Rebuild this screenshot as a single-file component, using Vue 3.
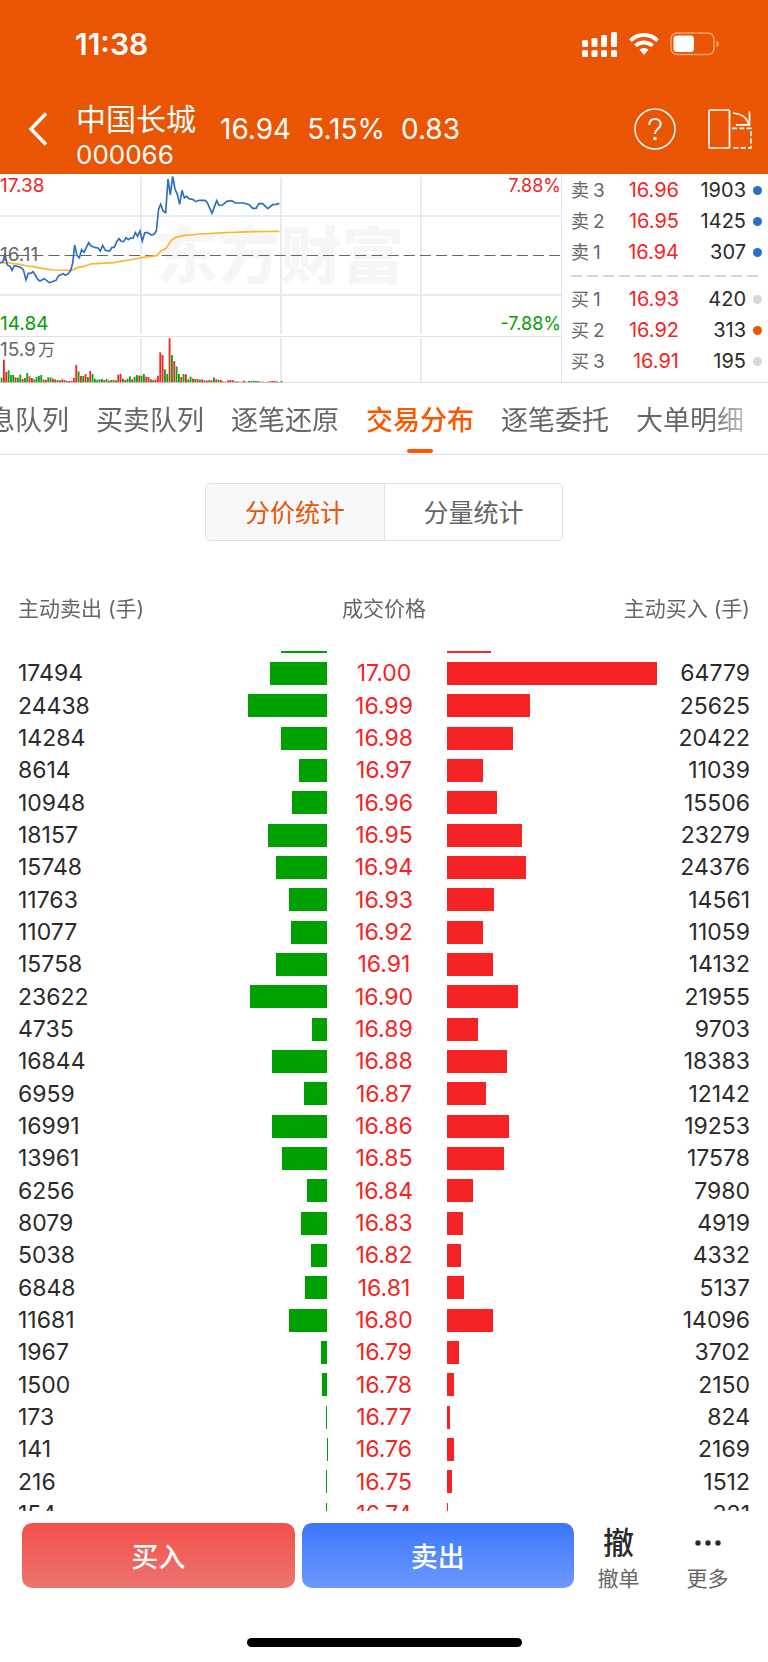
<script setup>
import { onMounted, ref } from 'vue'

const tabs = ['消息队列', '买卖队列', '逐笔还原', '交易分布', '逐笔委托', '大单明细']
const activeTab = ref('交易分布')
const modes = ['分价统计', '分量统计']
const activeMode = ref('分价统计')

const asks = [
  { name: '卖3', price: '16.96', volume: 1903, dot: 'blue' },
  { name: '卖2', price: '16.95', volume: 1425, dot: 'blue' },
  { name: '卖1', price: '16.94', volume: 307, dot: 'blue' },
]
const bids = [
  { name: '买1', price: '16.93', volume: 420, dot: 'gray' },
  { name: '买2', price: '16.92', volume: 313, dot: 'orange' },
  { name: '买3', price: '16.91', volume: 195, dot: 'gray' },
]

// [sell, price, buy]
const rows = [
  [14290, '17.01', 13580],
  [17494, '17.00', 64779],
  [24438, '16.99', 25625],
  [14284, '16.98', 20422],
  [8614, '16.97', 11039],
  [10948, '16.96', 15506],
  [18157, '16.95', 23279],
  [15748, '16.94', 24376],
  [11763, '16.93', 14561],
  [11077, '16.92', 11059],
  [15758, '16.91', 14132],
  [23622, '16.90', 21955],
  [4735, '16.89', 9703],
  [16844, '16.88', 18383],
  [6959, '16.87', 12142],
  [16991, '16.86', 19253],
  [13961, '16.85', 17578],
  [6256, '16.84', 7980],
  [8079, '16.83', 4919],
  [5038, '16.82', 4332],
  [6848, '16.81', 5137],
  [11681, '16.80', 14096],
  [1967, '16.79', 3702],
  [1500, '16.78', 2150],
  [173, '16.77', 824],
  [141, '16.76', 2169],
  [216, '16.75', 1512],
  [154, '16.74', 321],
]
const max = Math.max(...rows.flatMap(r => [r[0], r[2]]))
const barWidth = (n) => `${(n / max * 100).toFixed(2)}%`

// volume per tick, r = up, g = down
const volumes = ('g14 r68 r31 g36 g22 g22 r15 g14 g23 r10 g13 g28 r18 r13 g9 g16 g19 g22 r8 r8 g15 g15 r11 r9 g7 r6 r9 r7 g4 r4 ' +
  'r4 r13 r52 g33 r19 g19 r25 g16 r34 g25 g11 g8 g9 g10 r7 g10 r5 g7 r7 g6 r23 r25 g11 r7 g11 g18 r9 g17 g22 r20 ' +
  'g20 g25 r17 r16 g9 r7 r8 r20 r90 r82 g39 g25 r132 g82 r64 g48 g25 r16 g25 r24 g9 g17 r11 g10 r10 g8 r9 r6 r5 g7 ' +
  'r6 g15 r9 g8 r7 r3 r2 r6 r7 r7 g3 g3 r2 r2 r5 r2 g4 g4 g5 g4 g4 r2 r2 r1 g2 r3 r4 r4 r3 g1 g4')
  .split(' ')
  .map((v, i) => ({ x: 2 + i * 7, h: Number(v.slice(1)), up: v[0] === 'r' }))

const priceLine = '0,293 8,292 15,268 22,300 30,304 36,316 43,302 60,306 70,314 78,345 85,325 92,325 99,320 106,330 113,343 120,348 133,341 148,353 168,346 176,332 190,326 196,331 205,326 212,316 218,295 224,240 231,272 238,278 245,254 252,262 266,233 273,243 287,248 294,249 301,258 308,241 316,256 329,258 336,247 343,247 350,230 357,221 364,229 371,230 378,218 385,224 392,219 399,220 406,203 413,214 420,198 427,228 434,204 441,202 455,210 462,208 469,198 476,132 482,118 489,137 497,143 504,42 511,90 518,34 525,72 532,88 539,118 546,76 553,99 560,94 567,101 578,103 588,110 597,106 615,106 622,113 636,145 650,107 657,121 668,120 680,109 695,107 706,114 730,114 748,119 758,130 768,130 777,116 788,116 803,131 818,119 828,118 838,115'
const avgLine = '0,293 30,294 60,298 80,303 100,305 130,311 160,315 215,316 232,308 250,305 272,297 300,295 342,293 360,289 390,285 430,277 470,272 484,257 498,250 512,228 526,217 550,212 600,207 680,203 760,200 838,199'

const tabBar = ref(null)
const list = ref(null)
onMounted(() => {
  tabBar.value.scrollLeft = 39
  list.value.scrollTop = 26
})
</script>

<template>
  <div class="page">
    <header class="header">
      <div class="status">
        <span class="time">11:38</span>
        <div class="status-icons">
          <svg width="36" height="26" viewBox="0 0 36 26" fill="#fff">
            <rect x="0" y="9" width="6" height="7" rx="1.5" />
            <rect x="9.5" y="7" width="6" height="9" rx="1.5" />
            <rect x="19" y="4" width="6" height="12" rx="1.5" />
            <rect x="29" y="1" width="6" height="15" rx="1.5" />
            <rect x="0" y="19" width="6" height="7" rx="1.5" />
            <rect x="9.5" y="19" width="6" height="7" rx="1.5" />
            <rect x="19" y="19" width="6" height="7" rx="1.5" />
            <rect x="29" y="19" width="6" height="7" rx="1.5" />
          </svg>
          <svg width="30" height="22" viewBox="0 0 30 22" fill="#fff">
            <path d="M15 0C20.800 0 26 2.200 29.800 6.200L27.200 9C24 5.700 19.700 3.900 15 3.900S6 5.700 2.800 9L.2 6.200C4 2.200 9.200 0 15 0Z" />
            <path d="M15 7.600C18.700 7.600 22.200 9 24.800 11.500L22.100 14.200C20.200 12.400 17.700 11.400 15 11.400S9.800 12.400 7.900 14.200L5.200 11.500C7.800 9 11.300 7.600 15 7.600Z" />
            <path d="M15 15C16.700 15 18.300 15.700 19.500 16.800L15 22L10.500 16.800C11.700 15.700 13.300 15 15 15Z" />
          </svg>
          <svg width="50" height="24" viewBox="0 0 50 24">
            <rect x="1" y="1" width="43" height="21.500" rx="6" fill="none" stroke="#fff" stroke-opacity=".45" stroke-width="1.500" />
            <rect x="3.500" y="3.500" width="20.500" height="16.500" rx="3.500" fill="#fff" />
            <path d="M46.500 8.500C49.500 10 49.500 14 46.500 15.500Z" fill="#fff" fill-opacity=".5" />
          </svg>
        </div>
      </div>
      <div class="title-bar">
        <button class="icon-btn back" aria-label="返回">
          <svg width="20" height="34" viewBox="0 0 20 34" fill="none" stroke="#fff" stroke-width="3.500">
            <path d="M18 1.500L3 17L18 32.500" />
          </svg>
        </button>
        <div class="stock">
          <h1>中国长城</h1>
          <span>000066</span>
        </div>
        <div class="quote">
          <span>16.94</span>
          <span>5.15%</span>
          <span>0.83</span>
        </div>
        <button class="icon-btn" aria-label="帮助">
          <svg width="42" height="42" viewBox="0 0 42 42" fill="none" stroke="#fff" stroke-width="1.500">
            <circle cx="21" cy="21" r="20" />
            <path d="M15.300 17C15.300 13 17.500 11 21 11S26.700 13.200 26.700 16.300C26.700 20.500 21 20.500 21 26" stroke-width="2" />
            <circle cx="21" cy="30.500" r="1.800" fill="#fff" stroke="none" />
          </svg>
        </button>
        <button class="icon-btn rotate" aria-label="横屏">
          <svg width="44" height="40" viewBox="0 0 44 40" fill="none" stroke="#fff" stroke-width="1.700">
            <rect x="1" y="1" width="20.500" height="38" rx="1" />
            <path d="M25 4C33 4.500 39 9 41 15.500M41.500 2.500V15.800H28" />
            <path d="M24 19.300H43V38.800H24" stroke-dasharray="5 2.300" />
          </svg>
        </button>
      </div>
    </header>

    <section class="market">
      <svg class="chart" viewBox="0 0 561 209">
        <text x="156" y="105" class="watermark">东方财富</text>
        <g stroke="#e8eaf1" stroke-width="2" fill="none">
          <path d="M0 42H561M0 121H561M141 3V160M281 3V160M421 3V160M141 164V208M281 164V208M421 164V208" />
          <path d="M0 162.500H561M0 208.500H561" stroke-width="1" stroke="#dfe1e8" />
        </g>
        <path d="M0 81.500H560" stroke="#666" stroke-width="1.200" stroke-dasharray="11 5.150" />
        <svg width="561" height="209" viewBox="0 27 1683 627">
          <rect v-for="v in volumes" :key="v.x" :x="v.x" :y="652 - v.h" width="5.500" :height="v.h" :fill="v.up ? '#f52323' : '#0fa010'" />
          <polyline :points="avgLine" fill="none" stroke="#ffb52e" stroke-width="5" />
          <polyline :points="priceLine" fill="none" stroke="#2b6fc4" stroke-width="5" />
        </svg>
        <g class="axis">
          <text x="0" y="18" fill="#f52323">17.38</text>
          <text x="0" y="87" fill="#666">16.11</text>
          <text x="0" y="156" fill="#00a000">14.84</text>
          <text x="0" y="182" fill="#666">15.9<tspan dx="2" class="unit">万</tspan></text>
        </g>
        <g class="axis percent">
          <text x="561" y="18" fill="#f52323">7.88%</text>
          <text x="561" y="156" fill="#00a000">-7.88%</text>
        </g>
      </svg>
      <div class="book">
        <table>
          <tbody>
            <tr v-for="o in asks" :key="o.name">
              <th scope="row">{{ o.name[0] }}<span>{{ o.name[1] }}</span></th>
              <td class="book-price">{{ o.price }}</td>
              <td class="book-volume">{{ o.volume }}</td>
              <td class="book-dot"><i :class="o.dot"></i></td>
            </tr>
          </tbody>
        </table>
        <div class="divider"></div>
        <table>
          <tbody>
            <tr v-for="o in bids" :key="o.name">
              <th scope="row">{{ o.name[0] }}<span>{{ o.name[1] }}</span></th>
              <td class="book-price">{{ o.price }}</td>
              <td class="book-volume">{{ o.volume }}</td>
              <td class="book-dot"><i :class="o.dot"></i></td>
            </tr>
          </tbody>
        </table>
      </div>
    </section>

    <nav class="tabs">
      <div ref="tabBar" class="tabs-scroll">
        <button v-for="t in tabs" :key="t" :class="{ active: t === activeTab }" @click="activeTab = t">{{ t }}</button>
      </div>
    </nav>

    <div class="modes">
      <button v-for="m in modes" :key="m" :class="{ active: m === activeMode }" @click="activeMode = m">{{ m }}</button>
    </div>

    <div ref="list" class="list">
      <table>
        <colgroup>
          <col class="col-volume">
          <col>
          <col class="col-price">
          <col>
          <col class="col-volume">
        </colgroup>
        <thead>
          <tr>
            <th colspan="2" class="sell-head">主动卖出 (手)</th>
            <th>成交价格</th>
            <th colspan="2" class="buy-head">主动买入 (手)</th>
          </tr>
        </thead>
        <tbody>
          <tr v-for="[sell, price, buy] in rows" :key="price">
            <td class="sell">{{ sell }}</td>
            <td><div class="bar sell-bar" :style="{ width: barWidth(sell) }"></div></td>
            <td class="price">{{ price }}</td>
            <td><div class="bar buy-bar" :style="{ width: barWidth(buy) }"></div></td>
            <td class="buy">{{ buy }}</td>
          </tr>
        </tbody>
      </table>
    </div>

    <footer class="footer">
      <div class="actions">
        <button class="trade buy-btn">买入</button>
        <button class="trade sell-btn">卖出</button>
        <button class="more-btn">
          <b>撤</b>
          <span>撤单</span>
        </button>
        <button class="more-btn">
          <svg width="30" height="40" viewBox="0 0 30 40" fill="#2a2a2a">
            <circle cx="5" cy="20" r="2.700" />
            <circle cx="15" cy="20" r="2.700" />
            <circle cx="25" cy="20" r="2.700" />
          </svg>
          <span>更多</span>
        </button>
      </div>
      <div class="home-bar"></div>
    </footer>
  </div>
</template>

<style>
body {
  margin: 0;
  background: #fff;
}
</style>

<style scoped>
.page {
  display: flex;
  flex-direction: column;
  height: 100vh;
  font-family: Inter, "Noto Sans CJK SC", sans-serif;
  color: #2a2a2a;
}
button {
  padding: 0;
  border: 0;
  background: none;
  font: inherit;
  color: inherit;
  cursor: pointer;
}
svg {
  display: block;
  flex: none;
}
table {
  width: 100%;
  border-collapse: collapse;
}
th,
td {
  padding: 0;
  font-weight: 400;
}

/* header */
.header {
  flex: none;
  background: #ea5504;
  color: #fff;
}
.status {
  display: flex;
  align-items: center;
  justify-content: space-between;
  height: 88px;
  padding: 0 48px 0 75px;
}
.time {
  font-size: 30px;
  font-weight: 600;
}
.status-icons {
  display: flex;
  align-items: center;
  gap: 11px;
}
.title-bar {
  display: flex;
  align-items: center;
  height: 82px;
  padding: 0 16px 4px 28px;
}
.icon-btn {
  flex: none;
}
.back {
  margin-right: 28px;
}
.rotate {
  margin-left: 32px;
}
.stock {
  padding-top: 14px;
  font-size: 26px;
  line-height: 34px;
}
.stock span {
  display: block;
}
h1 {
  margin: 0;
  font-size: 30px;
  font-weight: 400;
  line-height: 38px;
}
.quote {
  display: flex;
  flex: 1;
  gap: 16px;
  margin-left: 24px;
  font-size: 28px;
}

/* chart and order book */
.market {
  display: flex;
  flex: none;
}
.chart {
  flex: 1;
  min-width: 0;
}
.watermark {
  font-size: 62px;
  font-weight: 900;
  fill: #f6f6f6;
}
.axis {
  font-size: 19px;
}
.percent {
  font-size: 18px;
  text-anchor: end;
}
.unit {
  font-size: 17px;
}
.book {
  box-sizing: border-box;
  width: 207px;
  padding: 1px 6px 0 9px;
  border-left: 1px solid #e0e2ea;
  border-bottom: 1px solid #d8dae4;
  font-size: 20px;
  line-height: 31px;
}
.book th,
.book td {
  vertical-align: baseline;
}
.book th {
  width: 36px;
  height: 31px;
  font-size: 18px;
  text-align: left;
  color: #666;
}
.book th span {
  margin-left: 4px;
  font-size: 19px;
}
.book-price {
  width: 72px;
  text-align: right;
  color: #f52323;
}
.book-volume {
  text-align: right;
}
.book td.book-dot {
  width: 16px;
  vertical-align: middle;
}
.book-dot i {
  display: block;
  width: 9px;
  height: 9px;
  margin-left: auto;
  border-radius: 50%;
}
.blue {
  background: #2b6fc4;
}
.gray {
  background: #d4d8de;
}
.orange {
  background: #ea5504;
}
.divider {
  height: 2px;
  margin: 7px 0;
  background: repeating-linear-gradient(to right, #d4d8de 0 11px, transparent 11px 16px);
}

/* tabs */
.tabs {
  flex: none;
  border-bottom: 1px solid #e2e3e6;
}
.tabs-scroll {
  display: flex;
  gap: 27px;
  height: 71px;
  padding-right: 48px;
  overflow-x: auto;
  scrollbar-width: none;
  mask-image: linear-gradient(to left, transparent, #000 60px);
}
.tabs button {
  position: relative;
  flex: none;
  font-size: 27px;
  color: #666;
}
.tabs .active {
  font-weight: 500;
  color: #ff5500;
}
.tabs .active::after {
  content: "";
  position: absolute;
  bottom: 1px;
  left: 50%;
  width: 26px;
  height: 4px;
  margin-left: -13px;
  border-radius: 2px;
  background: #ff5500;
}

/* price / volume switch */
.modes {
  display: flex;
  flex: none;
  align-self: center;
  box-sizing: border-box;
  height: 58px;
  margin: 28px 0;
  border: 1px solid #dfe1e6;
  border-radius: 5px;
  overflow: hidden;
}
.modes button {
  width: 178px;
  padding-bottom: 2px;
  font-size: 25px;
  color: #666;
}
.modes button + button {
  border-left: 1px solid #dfe1e6;
}
.modes .active {
  background: #f6f8fa;
  color: #ea5504;
}

/* distribution list */
.list {
  flex: 1;
  min-height: 0;
  overflow-y: auto;
  scrollbar-width: none;
}
.list table {
  table-layout: fixed;
}
.col-volume {
  width: 117px;
}
.col-price {
  width: 114px;
}
thead {
  position: sticky;
  top: 0;
  z-index: 1;
  background: #fff;
}
thead th {
  height: 82px;
  padding-bottom: 2px;
  box-sizing: border-box;
  font-size: 21px;
  line-height: 78px;
  color: #666;
}
.sell-head {
  padding-left: 18px;
  text-align: left;
}
.buy-head {
  padding-right: 18px;
  text-align: right;
}
.list tbody tr {
  height: 32px;
}
.list tbody tr:nth-child(3n) {
  height: 33px;
}
.list tbody td {
  font-size: 23px;
  line-height: 32px;
}
.sell {
  padding-left: 18px;
}
.buy {
  padding-right: 18px;
  text-align: right;
}
.price {
  text-align: center;
  color: #f52323;
}
.bar {
  height: 23px;
}
.sell-bar {
  margin-left: auto;
  background: #00a000;
}
.buy-bar {
  margin-left: 6px;
  background: #f52323;
}

/* bottom actions */
.footer {
  flex: none;
  padding: 12px 0 15px;
}
.actions {
  display: flex;
  height: 65px;
  padding: 0 16px 0 22px;
}
.trade {
  flex: 1;
  border-radius: 10px;
  font-size: 27px;
  font-weight: 500;
  color: #fff;
}
.buy-btn {
  margin-right: 7px;
  background: linear-gradient(#f4504b, #ec746e);
}
.sell-btn {
  background: linear-gradient(#3b76fb, #6c99fe);
}
.more-btn {
  display: flex;
  flex-direction: column;
  align-items: center;
  width: 89px;
  font-size: 21px;
  line-height: 32px;
  color: #666;
}
.more-btn b {
  font-size: 31px;
  font-weight: 500;
  line-height: 40px;
  color: #2a2a2a;
}
.home-bar {
  width: 275px;
  height: 9px;
  margin: 50px auto 0;
  border-radius: 5px;
  background: #000;
}
</style>
